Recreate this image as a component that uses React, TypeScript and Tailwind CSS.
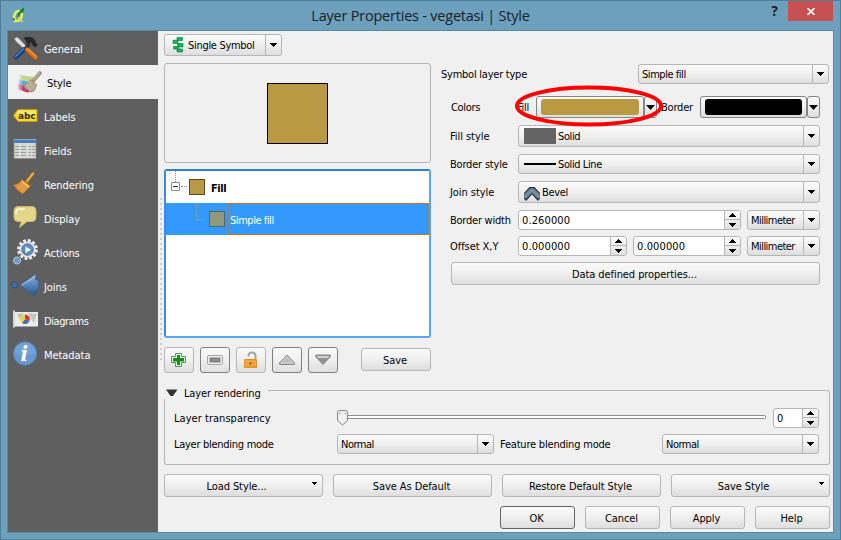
import React from "react";

const face = "bg-linear-to-b from-[#fbfbfb] via-[#efefef] to-[#dedede]";
const edge = "border border-[#b6b6b6] rounded-[3px]";

function Down({ className = "" }: { className?: string }) {
  return (
    <svg className={`block shrink-0 ${className}`} width="7" height="4" viewBox="0 0 7 4" shapeRendering="crispEdges">
      <path d="M0 0h7v1h-1v1h-1v1h-1v1h-1v-1h-1v-1h-1v-1h-1z" fill="#000" />
    </svg>
  );
}

function Up() {
  return (
    <svg className="block" width="7" height="4" viewBox="0 0 7 4" shapeRendering="crispEdges">
      <path d="M3 0h1v1h1v1h1v1h1v1h-7v-1h1v-1h1v-1h1z" fill="#000" />
    </svg>
  );
}

function Combo({ className, children }: { className: string; children: React.ReactNode }) {
  return (
    <div className={`flex shrink-0 ${face} ${edge} ${className}`}>
      <div className="flex flex-1 items-center pl-[3px]">{children}</div>
      <div className="flex w-4 items-center justify-center border-l border-[#b6b6b6]">
        <Down />
      </div>
    </div>
  );
}

function Spin({ value, className }: { value: string; className: string }) {
  return (
    <div className={`flex h-5 shrink-0 overflow-hidden bg-white ${edge} ${className}`}>
      <div className="flex flex-1 items-center pl-[3px]">
        <span className="tracking-[0.12px]">{value}</span>
      </div>
      <div className={`flex w-4 flex-col border-l border-[#b6b6b6] ${face}`}>
        <div className="flex h-[9px] items-center justify-center border-b border-[#b6b6b6]">
          <Up />
        </div>
        <div className="flex flex-1 items-center justify-center">
          <Down />
        </div>
      </div>
    </div>
  );
}

function Button({ className, children }: { className: string; children: React.ReactNode }) {
  return (
    <button className={`flex h-[23px] shrink-0 items-center justify-center tracking-[-0.08px] ${face} rounded-[3px] border ${className}`}>
      {typeof children === "string" ? <span className="pr-[2px]">{children}</span> : children}
    </button>
  );
}

function GeneralIcon() {
  return (
    <svg width="26" height="26" viewBox="0 0 26 26">
      <path d="M1.500 4l2-2 3 2 8 9-2 2-9-8z" fill="#dfe2e4" stroke="#8e9295" strokeWidth=".5" />
      <path d="M10 3.500q3-2.500 8-1.500 4 1.500 5 6l2 1.500-2.500 3-3-2-1-3-3 1.500-2-1-1-3z" fill="#25292c" />
      <path d="M15 7.500l3 2.500-5 6-3-2z" fill="#34383b" />
      <path d="M11 14.500l-8 7.500" stroke="#1d3f74" strokeWidth="4.600" strokeLinecap="round" />
      <path d="M10.500 14l-8 7.500" stroke="#4f87cc" strokeWidth="1.400" strokeLinecap="round" />
      <path d="M14 14.500l8.500 8" stroke="#e8690b" strokeWidth="4.200" strokeLinecap="round" />
      <path d="M15 14l8 7.500" stroke="#ffa34d" strokeWidth="1.200" strokeLinecap="round" />
    </svg>
  );
}

function StyleIcon() {
  return (
    <svg width="26" height="26" viewBox="0 0 26 26">
      <defs>
        <linearGradient id="fade">
          <stop stopColor="#f0f0f0" stopOpacity=".95" />
          <stop offset="1" stopColor="#f0f0f0" stopOpacity="0" />
        </linearGradient>
      </defs>
      <path d="M4 6l14 2-2 6L3 11z" fill="#c4d68c" />
      <path d="M3 11l12 2-2 5-11-2.500z" fill="#5aa8e8" />
      <path d="M2 15.500l11 2 1 5.500-3 .5L1.500 20z" fill="#c43e68" />
      <path d="M1 4h6v18H1z" fill="url(#fade)" />
      <path d="M17 12l7-8" stroke="#9b907a" strokeWidth="3.600" strokeLinecap="round" />
      <path d="M17.500 11l6-7" stroke="#bdb39d" strokeWidth="1.500" strokeLinecap="round" />
      <path d="M8.500 16.500l6-6 6 5c-1 5-2.500 7.500-5.500 7.500-2-1.500-3-1-4-3-2 0-2.500-1.500-2.500-3.500z" fill="#b3a88f" stroke="#91866f" strokeWidth=".7" />
      <path d="M12 12.500l6 6M10.500 15.500l4.500 5.500" stroke="#d3c8ae" strokeWidth=".8" />
    </svg>
  );
}

function LabelsIcon() {
  return (
    <svg width="26" height="26" viewBox="0 0 26 26">
      <path d="M.5 12.500L5 6.500h19v12H5z" fill="#f8db26" stroke="#c39b0b" />
      <path d="M5 7.500h18v4H3.500z" fill="#fbe765" />
      <text x="5" y="15.800" fontSize="9.500" fontWeight="bold" fontFamily="DejaVu Sans, sans-serif" textLength="17.500" lengthAdjust="spacingAndGlyphs" fill="#302f35">abc</text>
    </svg>
  );
}

function FieldsIcon() {
  return (
    <svg width="26" height="26" viewBox="0 0 26 26">
      <path d="M1 3h22v18.500H1z" fill="#d6d8d2" stroke="#898c88" strokeWidth=".7" />
      <path d="M.5 2h23v4H.5z" fill="#4a7ab8" />
      <path d="M1 2.500h22" stroke="#86add9" />
      <path d="M2 9.500h20M2 12.500h20M2 15.500h20M2 18.500h20" stroke="#9a9e9a" strokeDasharray="4 1 6 1" />
      <path d="M7 6v15M15 6v15" stroke="#e9eae6" />
    </svg>
  );
}

function RenderingIcon() {
  return (
    <svg width="26" height="26" viewBox="0 0 26 26">
      <path d="M14 11l6-8.500" stroke="#b66f1c" strokeWidth="3.400" strokeLinecap="round" />
      <path d="M14 10l6-7.500" stroke="#efb75e" strokeWidth="1.800" strokeLinecap="round" />
      <path d="M9 8.500l8.500 6.500-7.500 8c-4-2-7-5-9.500-9 4-.5 6.500-2.500 8.500-5.500z" fill="#e0983a" stroke="#a9691f" strokeWidth=".7" />
      <path d="M9 10.500l7 5.500" stroke="#f6cb85" strokeWidth="1.300" />
      <path d="M5.500 17l3.500-3M8.500 20l4-4" stroke="#f0b866" strokeWidth=".7" />
    </svg>
  );
}

function DisplayIcon() {
  return (
    <svg width="26" height="26" viewBox="0 0 26 26">
      <path d="M5 1.500h14q4 0 4 4v7q0 4-4 4h-5l-7.500 6 2-6H5q-4 0-4-4v-7q0-4 4-4z" fill="#e5d789" stroke="#c9b962" />
      <path d="M3 9q-.5-5 3.500-5h5" stroke="#fdfae0" strokeWidth="1.500" fill="none" strokeLinecap="round" />
    </svg>
  );
}

function ActionsIcon() {
  return (
    <svg width="26" height="28" viewBox="0 0 26 28">
      <circle cx="14.500" cy="11.500" r="9" fill="none" stroke="#ececec" strokeWidth="2.800" strokeDasharray="2.900 1.812" />
      <circle cx="14.500" cy="11.500" r="8" fill="#e6e6e6" />
      <circle cx="14.500" cy="11.500" r="5.800" fill="#5b8cc6" stroke="#3c659a" strokeWidth=".8" />
      <path d="M12.500 8.500v6.500l5.500-3.200z" fill="#fff" />
      <circle cx="4" cy="22.500" r="3.500" fill="#6c9bd0" stroke="#dfe3e7" strokeDasharray="1.700 .5" />
    </svg>
  );
}

function JoinsIcon() {
  return (
    <svg className="-ml-0.5 shrink-0" width="29" height="26" viewBox="0 0 29 26">
      <defs>
        <linearGradient id="joinBlue" x1="0" y1="0" x2="0" y2="1">
          <stop stopColor="#8eb7e4" />
          <stop offset="1" stopColor="#214f8e" />
        </linearGradient>
      </defs>
      <circle cx="3.500" cy="12" r="3" fill="#3e6fae" stroke="#254976" strokeWidth=".8" />
      <path d="M8.500 12L25 .8l-.5 5.700 3 1v9l-3 1 .5 6z" fill="url(#joinBlue)" stroke="#2f5b94" strokeWidth=".7" />
      <path d="M11 12l13-8.500" stroke="#b2d0f0" strokeWidth=".8" />
    </svg>
  );
}

function DiagramsIcon() {
  return (
    <svg width="26" height="26" viewBox="0 0 26 26">
      <path d="M1 5h24v14.500H1z" fill="#ecedea" />
      <path d="M1 3.500v17" stroke="#d3d6d8" strokeWidth="2" />
      <path d="M4 7l6-1v4l-3 3zM15 6l9 1-2 5-1 4-3-4z" fill="#c3c5c0" />
      <path d="M12 12V7.500a4.800 4.800 0 0 1 4.500 6.500z" fill="#dc3434" />
      <path d="M12 12l4.500 2a4.800 4.800 0 0 1-7.500 2z" fill="#3970bd" />
      <path d="M12 12l-3 4a4.800 4.800 0 0 1 3-8.500z" fill="#f1d33b" />
    </svg>
  );
}

function MetadataIcon() {
  return (
    <svg width="26" height="26" viewBox="0 0 26 26">
      <circle cx="12" cy="12.500" r="11.700" fill="#6698d2" stroke="#4f80bc" strokeWidth=".8" />
      <path d="M1.500 12a10.500 10.500 0 0 1 21 0c-7 3-14 3-21 0z" fill="#7ca8db" opacity=".6" />
      <text x="7.500" y="19.500" fontSize="20" fontWeight="bold" fontStyle="italic" fontFamily="DejaVu Serif, serif" fill="#fff">i</text>
    </svg>
  );
}

const tabs: [string, React.ReactNode][] = [
  ["General", <GeneralIcon />],
  ["Style", <StyleIcon />],
  ["Labels", <LabelsIcon />],
  ["Fields", <FieldsIcon />],
  ["Rendering", <RenderingIcon />],
  ["Display", <DisplayIcon />],
  ["Actions", <ActionsIcon />],
  ["Joins", <JoinsIcon />],
  ["Diagrams", <DiagramsIcon />],
  ["Metadata", <MetadataIcon />],
];

function Sidebar() {
  return (
    <nav className="w-[150px] shrink-0 bg-[#5f5f5f]">
      {tabs.map(([name, icon]) => (
        <div key={name} className={`flex h-[34px] items-center ${name === "Style" ? "bg-[#f0f0f0] pl-2 text-black" : "pl-[5px] text-white"}`}>
          <div className="flex w-[31px] shrink-0 items-center">{icon}</div>
          <p className={name === "Diagrams" ? "pt-1 tracking-[-0.4px]" : "pt-1"}>{name}</p>
        </div>
      ))}
    </nav>
  );
}

function TitleBar() {
  return (
    <header className="flex h-[29px] shrink-0">
      <div className="w-[158px] pt-[6px] pl-[11px]">
        <svg width="15" height="17" viewBox="0 0 15 17">
          <ellipse cx="6" cy="9" rx="3.700" ry="5" fill="none" stroke="#e6ee58" strokeWidth="2.600" transform="rotate(18 6 9)" />
          <path d="M6 10l4.500 5M1 14l3 1" stroke="#dce445" strokeWidth="1.800" />
          <path d="M5 9Q7 3 12 .5q1 4-3.500 6l-3 4.500z" fill="#178332" />
          <path d="M0 11l3 1-1 2z" fill="#1b5930" />
        </svg>
      </div>
      <h1 className="flex-1 pt-[5px] text-center font-['Open_Sans',sans-serif] text-[14.5px] leading-5 tracking-[-0.22px] text-[#182228]">
        Layer Properties - vegetasi | Style
      </h1>
      <div className="flex w-[158px]">
        <div className="ml-[84px] w-[17px] text-center font-['Open_Sans',sans-serif] text-[14px] font-bold leading-5 text-[#222]">?</div>
        <div className="flex-1" />
        <div className="mr-[7px] flex h-5 w-[45px] items-center justify-center bg-[#c75050]">
          <svg className="mt-px" width="8" height="7" viewBox="0 0 8 7"><path d="M.5 0l7 7M7.500 0l-7 7" stroke="#fff" strokeWidth="1.600" /></svg>
        </div>
      </div>
    </header>
  );
}

function SymbolPanel() {
  return (
    <section className="flex w-[267px] shrink-0 flex-col">
      <Combo className="h-[22px] w-[118px]">
        <svg className="ml-1" width="12" height="16" viewBox="0 0 12 16">
          <path d="M5 .5h5.500v3H5zM1 3.300h5v3.200H1zM6 6.500h5V10H6zM1.500 9.500h5V12h-5zM5 12h5.500v3H5z" fill="#08b95b" stroke="#178447" strokeWidth=".7" />
          <path d="M5.500 3.300v9" stroke="#3e8a5c" strokeWidth=".8" />
        </svg>
        <span className="ml-1 tracking-[-0.3px]">Single Symbol</span>
      </Combo>
      <div className={`mt-[7px] flex h-[100px] items-center justify-center bg-[#f0f0f0] ${edge}`}>
        <div className="size-[61px] border border-black bg-[#b99943]" />
      </div>
      <div className="mt-1.5 h-[169px] rounded-[3px] border-2 border-[#55a7f6] border-t-[#2e80d2] border-l-[#3b8ce0] bg-white">
        <div className="flex h-8">
          <div className="flex w-[23px] flex-col pl-[5px]">
            <div className="ml-1 h-[11px] w-px border-l border-dotted border-[#888]" />
            <div className="flex items-center">
              <div className="flex size-[9px] shrink-0 items-center justify-center rounded-[1px] border border-[#8b8b8b] bg-white">
                <div className="h-px w-[5px] bg-[#333]" />
              </div>
              <div className="ml-px w-[6px] border-t border-dotted border-[#888]" />
            </div>
          </div>
          <div className="mt-2 size-4 border border-[#5d4a1d] bg-[#b99943]" />
          <p className="ml-1.5 pt-[10px] font-bold leading-4 tracking-[-0.4px]">Fill</p>
        </div>
        <div className="flex h-8 bg-[#3399ff] text-white">
          <div className="mt-px ml-[30px] h-4 w-[10px] border-b border-l border-dotted border-[#a3a184]" />
          <div className="mt-2 ml-[3px] size-4 border border-[#536762] bg-[#91987d]" />
          <div className="ml-[3px] flex flex-1 items-center border border-dotted border-[#cc6c20] pl-px">
            <span className="pt-[3px]! tracking-[-0.45px]">Simple fill</span>
          </div>
        </div>
      </div>
      <div className="mt-[9px] flex h-[26px]">
        <div className="flex gap-1.5">
          <Button className="h-[26px]! w-[30px] border-[#b6b6b6]">
            <svg width="16" height="16" viewBox="0 0 16 16">
              <path d="M4.500 1.500h6v3h4v6h-4v4h-6v-4h-4v-6h4z" fill="#e9f8e6" stroke="#4f9a55" />
              <path d="M6 3h3v3h4v3.500H9V13H6V9.500H2V6h4z" fill="#129016" />
            </svg>
          </Button>
          <Button className="h-[26px]! w-[30px] border-[#808080]">
            <svg width="16" height="16" viewBox="0 0 16 16">
              <rect x=".5" y="3.500" width="15" height="9" rx="1.500" fill="#eee" stroke="#a5a5a5" />
              <rect x="3" y="6" width="10" height="4" fill="#8b8b8b" stroke="#6d6d6d" strokeWidth=".8" />
            </svg>
          </Button>
          <Button className="h-[26px]! w-[30px] border-[#b6b6b6]">
            <svg width="16" height="18" viewBox="0 0 16 18">
              <path d="M5.500 5.500q0-4 3.500-4t3.500 4v3" fill="none" stroke="#a3a3a3" strokeWidth="2" />
              <path d="M1.500 8.500h12v8h-12z" fill="#ed9f31" stroke="#dd9228" />
              <path d="M2 10.500h11M2 13.500h11" stroke="#f4b450" />
              <path d="M7.500 11v3" stroke="#8f632a" strokeWidth="1.500" />
            </svg>
          </Button>
          <Button className="h-[26px]! w-[30px] border-[#808080]">
            <svg width="18" height="16" viewBox="0 0 18 16"><path d="M9 3l7.500 8q.5 1.500-1 1.500h-13q-1.500 0-1-1.500z" fill="#bcbcbc" stroke="#868686" /><path d="M9 4.500L3 11h12z" fill="none" stroke="#e2e2e2" strokeWidth=".7" /></svg>
          </Button>
          <Button className="h-[26px]! w-[30px] border-[#808080]">
            <svg width="18" height="16" viewBox="0 0 18 16"><path d="M2.500 3h13q1.500 0 1 1.500L9 12.500 1.500 4.500Q1 3 2.500 3z" fill="#929292" stroke="#868686" /><path d="M3 4h12l-1 2H4z" fill="#d2d2d2" /></svg>
          </Button>
        </div>
        <Button className="mt-px ml-auto w-[70px] border-[#b6b6b6]">Save</Button>
      </div>
    </section>
  );
}

function ColorButton({ color, className }: { color: string; className: string }) {
  return (
    <div className={`flex h-[22px] ${className}`}>
      <div className={`flex flex-1 rounded-[3px] border border-[#858585] px-1 py-[2px] ${face}`}>
        <div className={`flex-1 rounded-[3px] ${color}`} />
      </div>
      <div className={`flex w-[13px] items-center justify-center rounded-[3px] border border-[#858585] ${face}`}>
        <svg className="shrink-0" width="9" height="5" viewBox="0 0 9 5"><path d="M0 0h9L4.500 5z" fill="#000" /></svg>
      </div>
    </div>
  );
}

function Properties() {
  return (
    <section className="relative ml-[10px] flex w-[389px] shrink-0 flex-col">
      <div className="mt-[30px] mr-px flex h-5 items-center justify-between">
        <span className="tracking-[-0.24px]">Symbol layer type</span>
        <Combo className="h-5 w-[191px]"><span className="tracking-[-0.45px]">Simple fill</span></Combo>
      </div>
      <div className="mt-3 flex h-[22px] items-center pl-[10px]">
        <span className="w-[66px] tracking-[-0.3px]">Colors</span>
        <span className="w-[19px] tracking-[-0.3px]">Fill</span>
        <ColorButton className="w-[121px]" color="bg-[#b99a43]" />
        <span className="ml-1 w-[39px] tracking-[-0.2px]">Border</span>
        <ColorButton className="w-[120px]" color="bg-black" />
      </div>
      <div className="mt-[7px] flex h-[22px] items-center pl-[9px]">
        <span className="w-[68px]">Fill style</span>
        <Combo className="h-[22px] w-[302px]">
          <div className="ml-0.5 h-4 w-8 bg-[#646464]" /><span className="ml-0.5 tracking-[-0.4px]">Solid</span>
        </Combo>
      </div>
      <div className="mt-[7px] flex h-5 items-center pl-[9px]">
        <span className="w-[68px] whitespace-nowrap tracking-[-0.2px]">Border style</span>
        <Combo className="h-5 w-[302px]">
          <div className="ml-0.5 h-0.5 w-8 bg-black" /><span className="ml-0.5 tracking-[-0.4px]">Solid Line</span>
        </Combo>
      </div>
      <div className="mt-[7px] flex h-[22px] items-center pl-[9px]">
        <span className="w-[68px]">Join style</span>
        <Combo className="h-[22px] w-[302px]">
          <svg className="mt-1 ml-0.5" width="16" height="14" viewBox="0 0 16 14">
            <path d="M5.500 0h5L16 6v5.500L14 14 8 7.500 2 14l-2-2.500V6z" fill="#222d3a" />
            <path d="M6 1.300h4l6 6v3.200l-2 1.500-6-6-6 6-2-1.500V7.300z" fill="#6885a1" />
            <path d="M1 10l6-6.500h2L15 10" fill="none" stroke="#c7ac4c" strokeDasharray="1.500 1.500" />
          </svg>
          <span className="ml-0.5 tracking-[-0.35px]">Bevel</span>
        </Combo>
      </div>
      <div className="mt-[7px] flex h-5 items-center pl-[9px]">
        <span className="w-[68px] whitespace-nowrap tracking-[-0.24px]">Border width</span>
        <Spin value="0.260000" className="w-[223px]" />
        <Combo className="ml-1.5 h-5 w-[73px]"><span className="tracking-[-0.55px]">Millimeter</span></Combo>
      </div>
      <div className="mt-1.5 flex h-5 items-center pl-[9px]">
        <span className="w-[68px]">Offset X,Y</span>
        <Spin value="0.000000" className="w-[109px]" />
        <Spin value="0.000000" className="ml-1.5 w-[108px]" />
        <Combo className="ml-1.5 h-5 w-[73px]"><span className="tracking-[-0.55px]">Millimeter</span></Combo>
      </div>
      <Button className="mt-1.5 mr-[10px] ml-[10px] border-[#b6b6b6]">Data defined properties...</Button>
      <svg className="pointer-events-none absolute top-[50px] left-[73px]" width="150" height="44" viewBox="0 0 150 44">
        <ellipse cx="75" cy="22" rx="72" ry="18.500" fill="none" stroke="#f00" strokeWidth="4" />
      </svg>
    </section>
  );
}

function LayerRendering() {
  return (
    <section className="mt-[13px] flex h-[79px] flex-col">
      <div className="flex h-[13px]">
        <div className="flex w-[104px] items-start">
          <svg className="mt-[3px] ml-0.5 shrink-0" width="12" height="8" viewBox="0 0 12 8"><path d="M0 .5h11.500L7 7H4.500z" fill="#333" /></svg>
          <p className="ml-1.5 whitespace-nowrap pt-px tracking-[-0.14px]">Layer rendering</p>
        </div>
        <div className="mt-1 flex-1 rounded-tr-[3px] border-t border-r border-[#b6b6b6]" />
      </div>
      <div className="flex-1 rounded-b-[3px] border border-t-0 border-[#b6b6b6] pl-[9px]">
        <div className="mt-[9px] flex h-5 items-center">
          <span className="w-[163px] tracking-[0.04px]">Layer transparency</span>
          <div className="flex w-[429px] items-center">
            <svg width="11" height="16" viewBox="0 0 11 16">
              <path d="M2.500.5h6q2 0 2 2v8l-5 4.500-5-4.500v-8q0-2 2-2z" fill="#f0f0f0" stroke="#858585" />
              <path d="M2.500 4V3h1M8.500 4V3h-1" fill="none" stroke="#888" strokeWidth=".8" />
            </svg>
            <div className="-mt-0.5 h-1 flex-1 rounded-r-sm border border-l-0 border-[#8e8e8e] bg-white" />
          </div>
          <Spin value="0" className="ml-[7px] w-[46px]" />
        </div>
        <div className="mt-1.5 flex h-5 items-center">
          <span className="w-[163px] tracking-[-0.28px]">Layer blending mode</span>
          <Combo className="h-5 w-[157px]"><span className="tracking-[-0.5px]">Normal</span></Combo>
          <span className="ml-1.5 w-[162px] tracking-[-0.2px]">Feature blending mode</span>
          <Combo className="h-5 w-[157px]"><span className="tracking-[-0.5px]">Normal</span></Combo>
        </div>
      </div>
    </section>
  );
}

function MenuButton({ label }: { label: string }) {
  return (
    <Button className="w-[159px] border-[#b6b6b6]">
      <span className="flex-1 pr-1 text-center">{label}</span>
      <svg className="mr-[5px] mb-1 shrink-0" width="5" height="3" viewBox="0 0 5 3" shapeRendering="crispEdges">
        <path d="M0 0h5v1h-1v1h-1v1h-1v-1h-1v-1h-1z" />
      </svg>
    </Button>
  );
}

export default function App() {
  return (
    <div className="flex h-[540px] w-[841px] flex-col border border-[#527f98] bg-[#6ca0bd] font-['DejaVu_Sans_Condensed','DejaVu_Sans',sans-serif] text-[11px] leading-[14px] tracking-[-0.06px] text-black [&_span]:pt-0.5">
      <TitleBar />
      <div className="mx-1.5 flex h-[503px] border border-[#5688a2] bg-[#f0f0f0]">
        <Sidebar />
        <div className="flex w-1.5 shrink-0 flex-col items-center pt-[167px]">
          {Array.from({ length: 33 }, (_, i) => (
            <div key={i} className="mb-[3px] h-0.5 w-0.5 rounded-full bg-[#c3c3c3]" />
          ))}
        </div>
        <main className="w-[666px] shrink-0">
          <div className="flex h-[342px]">
            <div className="mt-[3px]"><SymbolPanel /></div>
            <div className="mt-[3px]"><Properties /></div>
          </div>
          <LayerRendering />
          <div className="mt-[9px] flex justify-between">
            <MenuButton label="Load Style..." />
            <Button className="w-[159px] border-[#b6b6b6]">Save As Default</Button>
            <Button className="w-[159px] border-[#b6b6b6]">Restore Default Style</Button>
            <MenuButton label="Save Style" />
          </div>
          <div className="mt-[9px] flex justify-end gap-[10px]">
            <Button className="w-[75px] border-[#666]">OK</Button>
            <Button className="w-[75px] border-[#b6b6b6]">Cancel</Button>
            <Button className="w-[75px] border-[#b6b6b6]">Apply</Button>
            <Button className="w-[75px] border-[#b6b6b6]">Help</Button>
          </div>
        </main>
      </div>
    </div>
  );
}
